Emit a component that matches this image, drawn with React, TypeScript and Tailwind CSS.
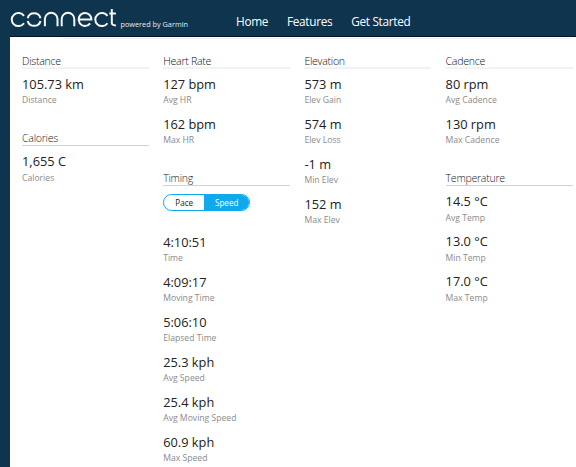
type Stat = { value: string; label: string };

const distance: Stat[] = [{ value: '105.73 km', label: 'Distance' }];
const calories: Stat[] = [{ value: '1,655 C', label: 'Calories' }];
const heartRate: Stat[] = [
  { value: '127 bpm', label: 'Avg HR' },
  { value: '162 bpm', label: 'Max HR' },
];
const timing: Stat[] = [
  { value: '4:10:51', label: 'Time' },
  { value: '4:09:17', label: 'Moving Time' },
  { value: '5:06:10', label: 'Elapsed Time' },
  { value: '25.3 kph', label: 'Avg Speed' },
  { value: '25.4 kph', label: 'Avg Moving Speed' },
  { value: '60.9 kph', label: 'Max Speed' },
];
const elevation: Stat[] = [
  { value: '573 m', label: 'Elev Gain' },
  { value: '574 m', label: 'Elev Loss' },
  { value: '-1 m', label: 'Min Elev' },
  { value: '152 m', label: 'Max Elev' },
];
const cadence: Stat[] = [
  { value: '80 rpm', label: 'Avg Cadence' },
  { value: '130 rpm', label: 'Max Cadence' },
];
const temperature: Stat[] = [
  { value: '14.5 °C', label: 'Avg Temp' },
  { value: '13.0 °C', label: 'Min Temp' },
  { value: '17.0 °C', label: 'Max Temp' },
];

function Logo() {
  return (
    <svg className="h-[22px] w-[108px] shrink-0" viewBox="10 7 108 22" fill="none" stroke="#f4f8fa" strokeWidth="2" aria-label="connect">
      <path d="M24 15.9A6.7 6.5 0 1 0 24 23.2" />
      <path d="M27.7 18.2A6.6 6.5 0 0 1 40.5 18.2M27.7 20.9A6.6 6.5 0 0 0 40.5 20.9" />
      <path d="M44.9 26.3V19A6.3 6.2 0 0 1 57.5 19V26.3" />
      <path d="M61.7 26.3V19A6.3 6.2 0 0 1 74.3 19V26.3" />
      <path d="M78.6 19.5H91.4A6.4 6.5 0 1 0 90.1 23.4" />
      <path d="M107.5 15.9A6.7 6.5 0 1 0 107.5 23.2" />
      <path d="M111.8 9V22.7Q111.8 25.5 115.9 25.4M109.3 13.6H115.9" />
    </svg>
  );
}

function Heading({ title, strong }: { title: string; strong?: boolean }) {
  return (
    <h2
      className={
        strong
          ? 'h-[15px] border-b-2 border-[#f2f2f3] pt-px text-[10.6px] leading-[13px] font-light tracking-[-0.28px] text-[#111]'
          : 'h-[14px] border-b border-[#d2d3d5] text-[10.6px] leading-[13px] font-light tracking-[-0.28px] text-[#222]'
      }
    >
      {title}
    </h2>
  );
}

function Stats({ items }: { items: Stat[] }) {
  return (
    <dl>
      {items.map((s) => (
        <div key={s.label} className="flex h-[39.92px] flex-col">
          <dt className="order-2 mt-[1.3px] h-3 text-[8.65px] leading-3 text-[#8b8b8b]">{s.label}</dt>
          <dd className="h-[18px] text-[12.8px] leading-[18px] text-[#222]">{s.value}</dd>
        </div>
      ))}
    </dl>
  );
}

function Toggle() {
  return (
    <div className="mt-2 flex h-[17px] w-[87px] overflow-hidden rounded-full border border-[#11a9ed] text-[8.1px] leading-[15px]">
      <button className="w-[40px] text-center text-[#222]">Pace</button>
      <button className="flex-1 bg-[#11a9ed] text-center text-white">Speed</button>
    </div>
  );
}

export default function App() {
  return (
    <div className="h-[467px] w-[576px] overflow-hidden bg-[#0f344e] font-['Open_Sans',sans-serif]">
      <header className="flex h-[36px] items-start pt-[7px] pl-[10px] text-white">
        <Logo />
        <span className="mt-[11px] ml-[2.5px] w-[115.5px] text-[7.3px] leading-3 whitespace-nowrap text-[#e5edf2]">powered by Garmin</span>
        <nav className="mt-[5px] flex gap-[18.8px] text-[11.8px] leading-[18px] tracking-[-0.3px] whitespace-nowrap">
          <a>Home</a>
          <a>Features</a>
          <a>Get Started</a>
        </nav>
      </header>
      <main className="ml-[10px] h-[431px] border-t border-[#041426] bg-white pt-px">
        <div className="mr-[4px] ml-[53px] h-px bg-[#eeeeee]" />
        <div className="grid grid-cols-[repeat(4,127px)] gap-x-[14.2px] pt-[15px] pl-3">
          <section>
            <Heading title="Distance" strong />
            <div className="h-[63px] pt-[6px]"><Stats items={distance} /></div>
            <Heading title="Calories" />
            <div className="pt-[6.4px]"><Stats items={calories} /></div>
          </section>
          <section>
            <Heading title="Heart Rate" strong />
            <div className="h-[103px] pt-[6px]"><Stats items={heartRate} /></div>
            <Heading title="Timing" />
            <Toggle />
            <div className="pt-[22px]"><Stats items={timing} /></div>
          </section>
          <section>
            <Heading title="Elevation" strong />
            <div className="pt-[6px]"><Stats items={elevation} /></div>
          </section>
          <section>
            <Heading title="Cadence" strong />
            <div className="h-[103px] pt-[6px]"><Stats items={cadence} /></div>
            <Heading title="Temperature" />
            <div className="pt-[6.4px]"><Stats items={temperature} /></div>
          </section>
        </div>
      </main>
    </div>
  );
}
